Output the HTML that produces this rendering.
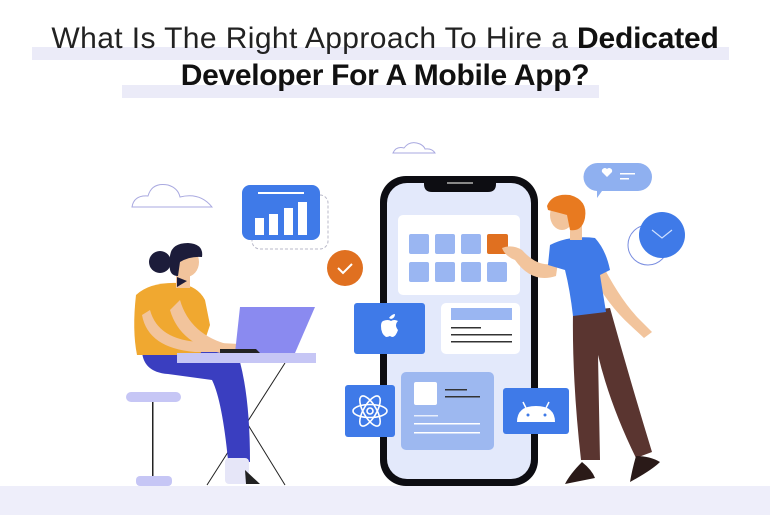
<!DOCTYPE html>
<html><head><meta charset="utf-8"><style>
html,body{margin:0;padding:0;background:#fff;width:770px;height:515px;overflow:hidden}
.t{position:absolute;left:0;width:770px;text-align:center;font-family:"Liberation Sans",sans-serif;color:#111;white-space:nowrap}
</style></head><body>
<svg width="770" height="515" style="position:absolute;left:0;top:0">
<rect x="32" y="47" width="697" height="13" fill="#ebebf8"/>
<rect x="122" y="85" width="477" height="13" fill="#ebebf8"/>
<rect x="0" y="486" width="770" height="29" fill="#eeeefa"/>
<path d="M132 207 Q134 195 148 196 Q152 182 168 185 Q178 188 180 197 Q200 192 212 207 Z" fill="none" stroke="#a9a9e0" stroke-width="1"/>
<path d="M393 153 Q396 146 404 148 Q410 140 420 144 Q424 146 425 149 Q432 148 435 153 Z" fill="none" stroke="#a9a9e0" stroke-width="1"/>
<rect x="252" y="195" width="76" height="54" rx="8" fill="none" stroke="#b8b8c8" stroke-dasharray="3,2"/>
<rect x="242" y="185" width="78" height="55" rx="8" fill="#3f7ae8"/>
<rect x="258" y="192" width="46" height="2" fill="#fff"/>
<rect x="255" y="218" width="9" height="17" fill="#fff"/>
<rect x="269" y="214" width="9" height="21" fill="#fff"/>
<rect x="284" y="208" width="9" height="27" fill="#fff"/>
<rect x="298" y="202" width="9" height="33" fill="#fff"/>
<circle cx="345" cy="268" r="18" fill="#e07020"/>
<path d="M338 268 l5 5 l9 -9" stroke="#fff" stroke-width="2" fill="none"/>
<rect x="380" y="176" width="158" height="310" rx="26" fill="#0d0d12"/>
<rect x="387" y="183" width="144" height="296" rx="20" fill="#e3e9fb"/>
<path d="M424 178 h72 v6 q0 8 -8 8 h-56 q-8 0 -8 -8z" fill="#0d0d12"/>
<rect x="447" y="182" width="26" height="2" fill="#888"/>
<rect x="398" y="215" width="122" height="80" rx="5" fill="#fff"/>
<g fill="#9ab6f2">
<rect x="409" y="234" width="20" height="20" rx="2"/><rect x="435" y="234" width="20" height="20" rx="2"/><rect x="461" y="234" width="20" height="20" rx="2"/>
<rect x="409" y="262" width="20" height="20" rx="2"/><rect x="435" y="262" width="20" height="20" rx="2"/><rect x="461" y="262" width="20" height="20" rx="2"/><rect x="487" y="262" width="20" height="20" rx="2"/>
</g>
<rect x="487" y="234" width="21" height="20" rx="2" fill="#e07020"/>
<rect x="441" y="303" width="79" height="51" rx="5" fill="#fff"/>
<rect x="451" y="308" width="61" height="12" fill="#9ab6f2"/>
<rect x="451" y="327" width="30" height="1.5" fill="#333"/><rect x="451" y="334" width="61" height="1.5" fill="#333"/><rect x="451" y="341" width="61" height="1.5" fill="#333"/>
<rect x="354" y="303" width="71" height="51" rx="3" fill="#3f7ae8"/>
<path d="M389 318 q3 -4 6 -4 q0 4 -4 5z M383 321 q5 -2 8 0 q3 -2 7 0 q-4 4 0 9 q-2 6 -5 7 q-2 0 -3 -1 q-2 1 -4 1 q-5 -3 -5 -11 q0 -4 2 -5z" fill="#fff"/>
<rect x="401" y="372" width="93" height="78" rx="5" fill="#9db8f0"/>
<rect x="414" y="382" width="23" height="23" rx="2" fill="#fff"/>
<rect x="445" y="389" width="22" height="1.5" fill="#333"/><rect x="445" y="396" width="35" height="1.5" fill="#333"/>
<rect x="414" y="415" width="24" height="1.5" fill="#e8eefc"/><rect x="414" y="423" width="66" height="1.5" fill="#fff"/><rect x="414" y="432" width="66" height="1.5" fill="#fff"/>
<rect x="345" y="385" width="50" height="52" rx="3" fill="#3f7ae8"/>
<g fill="none" stroke="#fff" stroke-width="1.6"><ellipse cx="370" cy="411" rx="17" ry="6.5"/><ellipse cx="370" cy="411" rx="17" ry="6.5" transform="rotate(60 370 411)"/><ellipse cx="370" cy="411" rx="17" ry="6.5" transform="rotate(-60 370 411)"/><circle cx="370" cy="411" r="3"/></g>
<rect x="503" y="388" width="66" height="46" rx="3" fill="#3f7ae8"/>
<path d="M517 422 q0 -16 19 -16 q19 0 19 16z" fill="#fff"/>
<path d="M526 408 l-3 -6 M546 408 l3 -6" stroke="#fff" stroke-width="1.5"/>
<circle cx="528" cy="415" r="1.5" fill="#3f7ae8"/><circle cx="545" cy="415" r="1.5" fill="#3f7ae8"/>
<rect x="126" y="392" width="55" height="10" rx="5" fill="#c6c6f5"/>
<rect x="152" y="402" width="1.5" height="76" fill="#222"/>
<rect x="136" y="476" width="36" height="10" rx="4" fill="#c6c6f5"/>
<path d="M210 363 L285 485 M285 363 L207 485" stroke="#222" stroke-width="1"/>
<path d="M142 345 Q140 372 168 374 L212 380 Q222 400 228 460 L250 462 Q250 400 240 362 Q230 345 200 345 Z" fill="#3a3ec0"/>
<rect x="225" y="458" width="24" height="26" rx="4" fill="#e6e6f8"/>
<path d="M245 470 l15 14 h-14z" fill="#222"/>
<path d="M136 295 Q150 282 178 283 Q198 286 205 300 L210 325 L200 355 L137 355 Q132 330 136 295Z" fill="#f0a830"/>
<path d="M180 300 Q190 335 230 345 L250 348 L248 356 L225 354 Q180 345 170 310Z" fill="#f2c49c"/>
<path d="M150 310 Q158 340 200 342 L240 344 L238 352 L195 352 Q148 348 142 315Z" fill="#f2c49c"/>
<path d="M176 270 h14 v18 h-14z" fill="#f2c49c"/>
<ellipse cx="186" cy="262" rx="13" ry="15" fill="#f2c49c"/>
<path d="M170 262 Q168 243 188 243 Q204 244 202 257 Q190 256 180 262 L178 276 Q168 276 170 262Z" fill="#1c1c3a"/>
<circle cx="160" cy="262" r="11" fill="#1c1c3a"/>
<path d="M177 277 l10 4 l-10 6z" fill="#1c1c3a"/>
<rect x="177" y="353" width="139" height="10" fill="#c6c6f5"/>
<path d="M240 307 L315 307 L295 353 L235 353Z" fill="#8a8af0"/>
<path d="M220 353 h40 l-4 -4 h-36z" fill="#222"/>
<path d="M598 163 h40 a10 10 0 0 1 0 28 h-36 l-5 7 l0 -7 a10 10 0 0 1 1 -28z" fill="#8fb0f0"/>
<path d="M607 177 l-5 -5 a3 3 0 0 1 5 -3 a3 3 0 0 1 5 3z" fill="#fff"/>
<rect x="620" y="173" width="15" height="1.5" fill="#fff"/><rect x="620" y="178" width="9" height="1.5" fill="#fff"/>
<circle cx="648" cy="245" r="20" fill="none" stroke="#7a8ee0" stroke-width="1"/>
<circle cx="662" cy="235" r="23" fill="#3f7ae8"/>
<path d="M652 230 l10 8 l10 -8" stroke="#cfe0ff" stroke-width="1.2" fill="none"/>
<path d="M502 248 Q512 244 522 250 Q540 270 558 262 L556 276 Q532 284 515 260 Q505 256 502 248Z" fill="#f2c49c"/>
<path d="M600 260 Q620 300 640 320 L652 332 L644 338 L630 325 Q608 305 592 275Z" fill="#f2c49c"/>
<path d="M573 312 L610 308 Q630 380 652 452 L636 458 Q610 405 598 355 L600 460 L581 460 Q572 380 573 312Z" fill="#5a3530"/>
<path d="M550 245 Q570 235 595 238 Q606 250 610 270 L600 275 L606 312 L573 316 Q570 290 565 270 L548 265Z" fill="#3f7ae8"/>
<rect x="570" y="226" width="12" height="14" fill="#f2c49c"/>
<ellipse cx="562" cy="215" rx="12" ry="15" fill="#f2c49c"/>
<path d="M547 206 Q552 193 570 195 Q588 200 585 218 Q582 232 570 230 L567 215 Q556 212 548 210Z" fill="#e87a20"/>
<path d="M582 462 Q592 470 595 478 L565 484 Q570 474 582 462Z M636 456 Q650 456 660 462 Q652 470 630 482 Q632 470 636 456Z" fill="#2a1a18"/>
</svg>
<div class="t" style="top:22px;font-size:30px;font-weight:300;letter-spacing:0.4px;color:#222">What Is The Right Approach To Hire a <b style="font-weight:700;color:#111;letter-spacing:-0.2px">Dedicated</b></div>
<div class="t" style="top:59px;font-size:30px;font-weight:700;letter-spacing:-0.3px">Developer For A Mobile App?</div>
</body></html>
